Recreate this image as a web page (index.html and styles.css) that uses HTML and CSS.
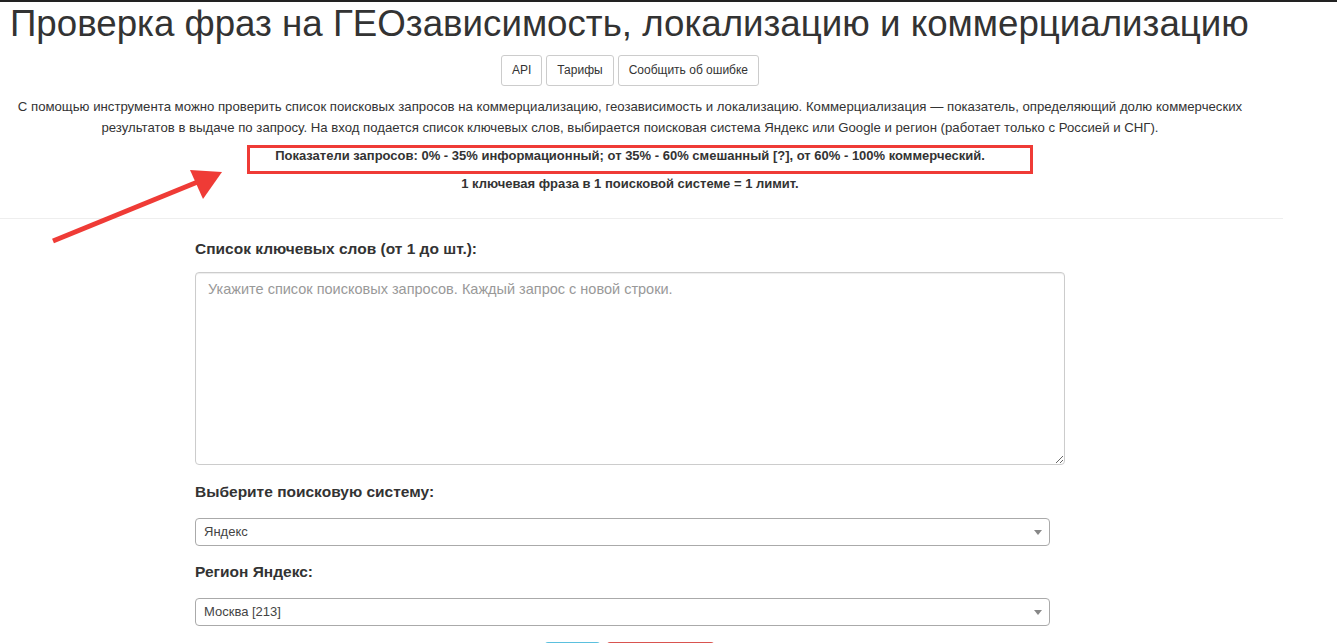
FILE: index.html
```html
<!DOCTYPE html>
<html lang="ru">

<head>
    <meta charset="UTF-8">
    <meta name="viewport" content="width=device-width, initial-scale=1.0">
    <title>Проверка фраз на ГЕОзависимость</title>
    <link rel="stylesheet" href="styles.css">
</head>

<body>
    <div class="topbar"></div>

    <div class="page">
        <h1>Проверка фраз на ГЕОзависимость, локализацию и коммерциализацию</h1>

        <div class="links">
            <a href="#api" class="btn">API</a>
            <a href="#prices" class="btn">Тарифы</a>
            <a href="#report" class="btn">Сообщить об ошибке</a>
        </div>

        <p class="intro">С помощью инструмента можно проверить список поисковых запросов на коммерциализацию, геозависимость и локализацию. Коммерциализация — показатель, определяющий долю коммерческих результатов в выдаче по запросу. На вход подается список ключевых слов, выбирается поисковая система Яндекс или Google и регион (работает только с Россией и СНГ).</p>

        <p class="note note-first">Показатели запросов: 0% - 35% информационный; от 35% - 60% смешанный [?], от 60% - 100% коммерческий.</p>
        <p class="note">1 ключевая фраза в 1 поисковой системе = 1 лимит.</p>
    </div>

    <hr class="divider">

    <form class="check-form" id="checkForm">
        <label for="phrases">Список ключевых слов (от 1 до шт.):</label>
        <textarea id="phrases" placeholder="Укажите список поисковых запросов. Каждый запрос с новой строки."></textarea>

        <label>Выберите поисковую систему:</label>
        <div class="select">Яндекс<span class="caret"></span></div>

        <label>Регион Яндекс:</label>
        <div class="select">Москва [213]<span class="caret"></span></div>

        <div class="actions">
            <button type="button" class="btn-info">Старт</button>
            <button type="button" class="btn-danger">Очистить форму</button>
        </div>
    </form>

    <!-- annotation over the screenshot -->
    <div class="mark-box"></div>
    <svg class="mark-arrow" width="190" height="90" viewBox="0 0 190 90">
        <line x1="13" y1="79" x2="160" y2="19" stroke="#ef3b36" stroke-width="5" />
        <polygon points="182,10 150,8 163,37" fill="#ef3b36" />
    </svg>
</body>

</html>
```

FILE: styles.css
```css
body {
    font-family: "Liberation Sans", Arial, sans-serif;
    color: #333;
    background: #fff;
    margin: 0;
    padding: 0;
    position: relative;
    overflow: hidden;
}

.topbar {
    height: 2px;
    background: #222;
}

.page {
    width: 1260px;
    text-align: center;
}

h1 {
    margin: 0;
    padding: 2px 0 0 10px;
    font-size: 36.7px;
    line-height: 40px;
    font-weight: 400;
    text-align: left;
    color: #333;
}

.links {
    display: flex;
    justify-content: center;
    gap: 4px;
    margin-top: 11px;
}

.btn {
    display: inline-block;
    padding: 5px 10px;
    font-size: 12px;
    line-height: 19px;
    color: #333;
    text-decoration: none;
    background: #fff;
    border: 1px solid #ccc;
    border-radius: 3px;
}

.intro {
    margin: 10px 0 0;
    font-size: 13.2px;
    line-height: 21px;
}

.note {
    margin: 0;
    font-size: 13px;
    line-height: 20px;
    font-weight: 700;
}

.note-first {
    margin: 8px 0 8px;
}

.divider {
    width: 1283px;
    margin: 24px 0 0;
    border: 0;
    border-top: 1px solid #eee;
}

.check-form {
    width: 870px;
    margin: 0 0 0 195px;
    padding-top: 4px;
    display: flex;
    flex-direction: column;
}

.check-form label {
    font-size: 15.5px;
    font-weight: 700;
    line-height: 22px;
    margin: 15px 0 12px;
}

textarea {
    height: 193px;
    margin-bottom: 1px;
    padding: 6px 12px;
    font-family: inherit;
    font-size: 14.5px;
    line-height: 20px;
    color: #555;
    border: 1px solid #ccc;
    border-radius: 4px;
    box-shadow: inset 0 1px 1px rgba(0, 0, 0, 0.075);
    resize: vertical;
    box-sizing: border-box;
}

textarea::placeholder {
    color: #999;
}

.select {
    position: relative;
    width: 855px;
    height: 28px;
    margin-top: 3px;
    box-sizing: border-box;
    padding: 0 8px;
    font-size: 13px;
    line-height: 26px;
    color: #444;
    border: 1px solid #aaa;
    border-radius: 4px;
}

.select .caret {
    position: absolute;
    right: 7px;
    top: 11px;
    border-left: 4px solid transparent;
    border-right: 4px solid transparent;
    border-top: 5px solid #888;
}

.actions {
    display: flex;
    justify-content: center;
    gap: 7px;
    margin-top: 16px;
    padding-right: 1px;
}

.actions button {
    padding: 6px 10px;
    font-family: inherit;
    font-size: 12px;
    line-height: 18px;
    color: #fff;
    border: 1px solid transparent;
    border-radius: 3px;
}

.btn-info {
    width: 55px;
    background: #5bc0de;
    border-color: #46b8da;
}

.btn-danger {
    width: 107px;
    background: #d9534f;
    border-color: #d43f3a;
}

.mark-box {
    position: absolute;
    left: 247px;
    top: 145px;
    width: 780px;
    height: 23px;
    border: 3px solid #ef3b36;
}

.mark-arrow {
    position: absolute;
    left: 40px;
    top: 162px;
}
```
